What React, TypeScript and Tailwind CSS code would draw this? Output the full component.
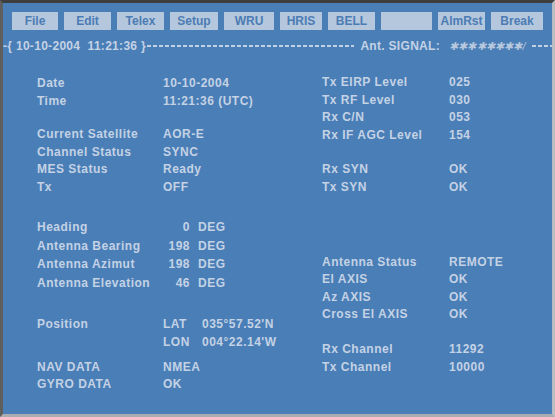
const font = { fontFamily: '"Liberation Sans", Arial, sans-serif' };

const buttons: { label: string; w: string }[] = [
  { label: "File", w: "w-[46px]" },
  { label: "Edit", w: "w-[47px]" },
  { label: "Telex", w: "w-[47px]" },
  { label: "Setup", w: "w-[48px]" },
  { label: "WRU", w: "w-[50px]" },
  { label: "HRIS", w: "w-[42px]" },
  { label: "BELL", w: "w-[47px]" },
  { label: "", w: "w-[51px]" },
  { label: "AlmRst", w: "w-[47px]" },
  { label: "Break", w: "w-[52px]" },
];

function Row({
  label,
  value,
  h = "h-[17.5px]",
  mt = "",
  labelW = "w-[126px]",
}: {
  label: string;
  value: React.ReactNode;
  h?: string;
  mt?: string;
  labelW?: string;
}) {
  return (
    <div className={`flex items-center whitespace-nowrap ${h} ${mt}`}>
      <span className={`${labelW} shrink-0`}>{label}</span>
      <span>{value}</span>
    </div>
  );
}

function Deg({ n }: { n: string }) {
  return (
    <span className="flex">
      <span className="w-[27px] text-right">{n}</span>
      <span className="ml-[8px]">DEG</span>
    </span>
  );
}

function Coord({ axis, v }: { axis: string; v: string }) {
  return (
    <span className="flex">
      <span className="w-[39px]">{axis}</span>
      <span>{v}</span>
    </span>
  );
}

// dashed rule of the status line, drawn as a repeating gradient
const dashes =
  "h-[1.5px] bg-[repeating-linear-gradient(90deg,#c2d0e4_0_4px,transparent_4px_6px)]";

export default function App() {
  return (
    <div
      style={font}
      className="h-[417px] w-[555px] overflow-hidden border-t-[3px] border-l-[3px] border-r-[3px] border-b-[3px] border-t-[#3e3e3e] border-l-[#5e5e5e] border-r-[#b9bcc0] border-b-[#a9adb2] bg-[#4a7eb6] text-[12px] font-bold text-[#c4d2e5]"
    >
      <div className="flex gap-[6px] pl-[9px] pt-[9px]">
        {buttons.map((b, i) => (
          <div
            key={i}
            className={`${b.w} flex h-[18px] items-center justify-center bg-[#b5c7dd] text-[#4b7cb3]`}
          >
            {b.label}
          </div>
        ))}
      </div>

      <div className="mt-[9px] flex h-[14px] items-center whitespace-nowrap tracking-[0.3px]">
        <span>-{"{"} 10-10-2004&nbsp;&nbsp;11:21:36 {"}"}</span>
        <div className={`ml-[1px] flex-1 ${dashes}`} />
        <span className="ml-[6px]">Ant. SIGNAL:</span>
        <span className="ml-[9px] w-[77px] text-[11px] font-normal italic tracking-[0.2px] text-[#b8c8de]">
          ✱✱✱✱✱✱✱✱/
        </span>
        <div className={`ml-[6px] w-[20px] ${dashes}`} />
      </div>

      <div className="flex tracking-[0.5px]">
        <div className="ml-[34px] mt-[21.25px] w-[285px]">
          <Row label="Date" value="10-10-2004" />
          <Row label="Time" value="11:21:36 (UTC)" />
          <Row label="Current Satellite" value="AOR-E" mt="mt-[16px]" />
          <Row label="Channel Status" value="SYNC" />
          <Row label="MES Status" value="Ready" />
          <Row label="Tx" value="OFF" />
          <Row label="Heading" value={<Deg n="0" />} h="h-[18.7px]" mt="mt-[22.5px]" />
          <Row label="Antenna Bearing" value={<Deg n="198" />} h="h-[18.7px]" />
          <Row label="Antenna Azimut" value={<Deg n="198" />} h="h-[18.7px]" />
          <Row label="Antenna Elevation" value={<Deg n="46" />} h="h-[18.7px]" />
          <Row
            label="Position"
            value={<Coord axis="LAT" v="035°57.52'N" />}
            h="h-[18px]"
            mt="mt-[22px]"
          />
          <Row label="" value={<Coord axis="LON" v="004°22.14'W" />} h="h-[18px]" />
          <Row label="NAV DATA" value="NMEA" h="h-[17px]" mt="mt-[8px]" />
          <Row label="GYRO DATA" value="OK" h="h-[17px]" />
        </div>

        <div className="mt-[20.25px] w-[200px]">
          <Row label="Tx EIRP Level" value="025" labelW="w-[127px]" />
          <Row label="Tx RF Level" value="030" labelW="w-[127px]" />
          <Row label="Rx C/N" value="053" labelW="w-[127px]" />
          <Row label="Rx IF AGC Level" value="154" labelW="w-[127px]" />
          <Row label="Rx SYN" value="OK" labelW="w-[127px]" mt="mt-[17px]" />
          <Row label="Tx SYN" value="OK" labelW="w-[127px]" />
          <Row label="Antenna Status" value="REMOTE" labelW="w-[127px]" mt="mt-[57.7px]" />
          <Row label="El AXIS" value="OK" labelW="w-[127px]" />
          <Row label="Az AXIS" value="OK" labelW="w-[127px]" />
          <Row label="Cross El AXIS" value="OK" labelW="w-[127px]" />
          <Row label="Rx Channel" value="11292" labelW="w-[127px]" mt="mt-[17.5px]" />
          <Row label="Tx Channel" value="10000" labelW="w-[127px]" />
        </div>
      </div>
    </div>
  );
}
